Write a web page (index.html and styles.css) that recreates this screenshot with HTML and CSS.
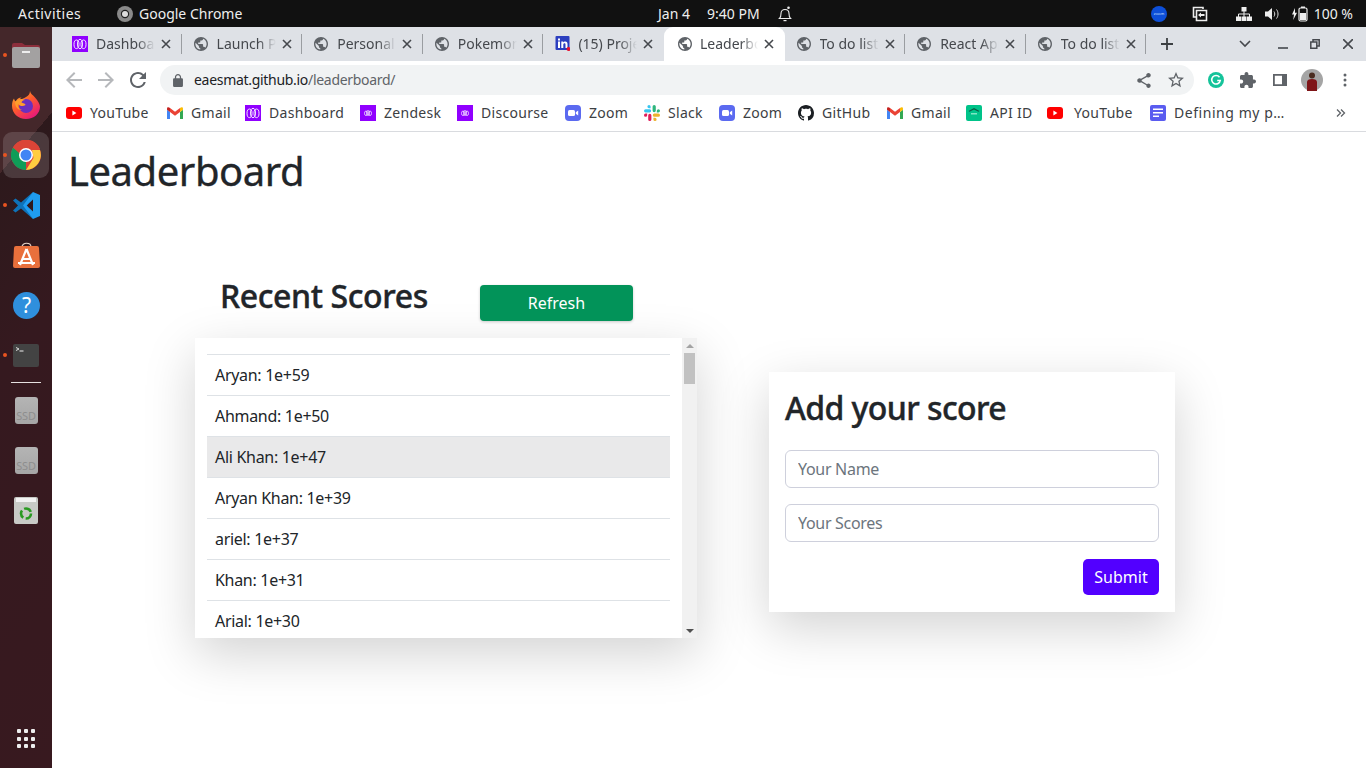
FILE: index.html
```html
<!DOCTYPE html>
<html lang="en">
<head>
<meta charset="utf-8">
<title>Leaderboard</title>
<link rel="stylesheet" href="styles.css">
</head>
<body>
<svg class="defs" width="0" height="0" aria-hidden="true">
  <symbol id="globe" viewBox="0.57 0.57 22.86 22.86"><path fill="#5f6368" d="M12 2C6.48 2 2 6.48 2 12s4.48 10 10 10 10-4.48 10-10S17.52 2 12 2zm-1 17.93c-3.95-.49-7-3.85-7-7.93 0-.62.08-1.21.21-1.79L9 15v1c0 1.1.9 2 2 2v1.93zm6.9-2.54c-.26-.81-1-1.39-1.9-1.39h-1v-3c0-.55-.45-1-1-1H8v-2h2c.55 0 1-.45 1-1V7h2c1.1 0 2-.9 2-2v-.41c2.93 1.19 5 4.06 5 7.41 0 2.08-.8 3.97-2.1 5.39z"/></symbol>
  <symbol id="meta" viewBox="0 0 16 16"><rect width="16" height="16" fill="#9000ff"/><g fill="none" stroke="#fff" stroke-width=".9"><ellipse cx="4.500" cy="8.300" rx="2.500" ry="4.300"/><ellipse cx="8" cy="8" rx="2.500" ry="4.600"/><ellipse cx="11.500" cy="8.300" rx="2.500" ry="4.300"/></g></symbol>
  <symbol id="metasmall" viewBox="0 0 16 16"><rect width="16" height="16" fill="#9000ff"/><g fill="none" stroke="#fff" stroke-width=".7"><ellipse cx="6" cy="8.300" rx="1.500" ry="2.300"/><ellipse cx="8" cy="8" rx="1.500" ry="2.500"/><ellipse cx="10" cy="8.300" rx="1.500" ry="2.300"/></g></symbol>
  <symbol id="close" viewBox="0 0 10 10"><path stroke="#45484d" stroke-width="1.600" d="M1 1l8 8M9 1l-8 8"/></symbol>
  <symbol id="yt" viewBox="0 0 16 12"><rect width="16" height="12" rx="3" fill="#f00"/><path fill="#fff" d="M6.400 3.600v4.800L10.400 6z"/></symbol>
  <symbol id="gmail" viewBox="0 0 16 12"><path fill="#4285f4" d="M0 12h3V5L0 2.700z"/><path fill="#34a853" d="M13 12h3V2.700L13 5z"/><path fill="#fbbc04" d="M13 1v4l3-2.300V1.500C16 0 14.300-.4 13 1z"/><path fill="#ea4335" d="M3 5V1l5 3.800L13 1v4L8 8.800z"/><path fill="#c5221f" d="M0 1.500v1.200L3 5V1C1.700-.4 0 0 0 1.500z"/></symbol>
  <symbol id="zoomb" viewBox="0 0 16 16"><rect width="16" height="16" rx="4" fill="#5b6af0"/><rect x="3" y="5" width="7" height="6" rx="1.500" fill="#fff"/><path fill="#fff" d="M10.800 7.300l2.400-1.700v4.800l-2.400-1.700z"/></symbol>
</svg>

<div class="desktop">
  <header class="topbar">
    <div class="top-left">
      <span class="activities">Activities</span>
      <span class="top-app">
        <svg class="top-chrome" width="16" height="16" viewBox="0 0 16 16"><circle cx="8" cy="8" r="8" fill="#8a8a8a"/><circle cx="8" cy="8" r="4.200" fill="#222"/><circle cx="8" cy="8" r="3" fill="#ddd"/></svg>
        Google Chrome
      </span>
    </div>
    <div class="top-center">
      <span class="top-date">Jan 4</span>
      <span class="top-time">9:40 PM</span>
      <svg class="top-bell" width="14" height="16" viewBox="0 0 14 16"><path fill="none" stroke="#eee" stroke-width="1.100" d="M1.500 12.500c1.200-1 1.500-2.500 1.500-5 0-2.500 1.500-4 4-4s4 1.500 4 4c0 2.500.3 4 1.500 5z"/><path fill="#eee" d="M5.500 14h3v1.200h-3z"/><circle cx="10.500" cy="1.800" r="1.300" fill="#eee"/></svg>
    </div>
    <div class="top-right">
      <svg class="tr-zoom" width="16" height="16" viewBox="0 0 16 16"><circle cx="8" cy="8" r="8" fill="#0d4fd8"/><text class="zoom-mini" x="8" y="9.200" text-anchor="middle">zoom</text></svg>
      <svg class="tr-screen" width="16" height="16" viewBox="0 0 16 16"><path fill="none" stroke="#eee" stroke-width="1.600" d="M11 3V1.500H1.500V11H4"/><path fill="none" stroke="#eee" stroke-width="1.600" d="M4.500 4.500h10v10h-10z"/><path fill="#eee" d="M6 9l3-2.500v1.500h3.500v2H9v1.500z"/></svg>
      <svg class="tr-net" width="16" height="14" viewBox="0 0 16 14"><path fill="#eee" d="M5.500 0h5v4.500h-5zM0 9.500h5V14H0zM11 9.500h5V14h-5zM5.500 9.500h5V14h-5z"/><path fill="none" stroke="#eee" d="M8 4v6M2.500 10V7h11v3"/></svg>
      <svg class="tr-vol" width="15" height="14" viewBox="0 0 15 14"><path fill="#eee" d="M0 4.500h3L7 1v12L3 9.500H0z"/><path fill="none" stroke="#ddd" d="M9 4.500c1 1.500 1 3.500 0 5M11.500 2.500c2 2.500 2 6.500 0 9"/></svg>
      <svg class="tr-batt" width="16" height="16" viewBox="0 0 16 16"><path fill="#eee" d="M3 2L0 8.500h2L1.200 14 5 6.700H3z"/><rect x="7" y="2" width="8" height="13" rx="1.500" fill="none" stroke="#eee" stroke-width="1.200"/><rect x="9" y=".5" width="4" height="1.500" fill="#eee"/><rect x="8" y="7" width="6" height="7" fill="#eee"/></svg>
      <span class="tr-pct">100 %</span>
    </div>
  </header>

  <div class="workspace">
    <nav class="dock">
      <div class="dock-item running">
        <svg width="30" height="26" viewBox="0 0 30 26"><path fill="#8d2f3c" d="M1 3a2 2 0 012-2h8l3 2h13a2 2 0 012 2v8H1z"/><rect x="1" y="5" width="28" height="21" rx="2" fill="#a3a1a1"/><rect x="11" y="9" width="8" height="2" fill="#eee"/></svg>
      </div>
      <div class="dock-item">
        <svg width="28" height="28" viewBox="0 0 28 28"><defs><linearGradient id="fx" x1="0" y1="0" x2=".7" y2="1"><stop offset="0" stop-color="#ffbd2e"/><stop offset=".5" stop-color="#ff5a2c"/><stop offset="1" stop-color="#e6177c"/></linearGradient></defs><path fill="url(#fx)" d="M18 0c.5 3 3 4 5 6.500 3 3.500 5 7 5 9 0 7-6 12.500-14 12.500S0 22.500 0 14.500C0 11 1 9 2 7.500c.3 1.500 1 2.500 2 3 .7-2.500 3-4 5.500-4-1 .8-2 1.800-2 3C11 7 18 6 18 0z"/><circle cx="14" cy="15" r="7" fill="#6a2fbf"/><path fill="#ff9d2c" d="M3 11c2-3 7-4 10-2-2 .3-3 1-3.500 2.500 1.500 1 4 1 4 2.500-2.500 2-6 1-7.500-1-.8 2 1 5 4 6-4 .3-7-3-7-8z"/></svg>
      </div>
      <div class="dock-item running active">
        <svg width="30" height="30" viewBox="0 0 30 30"><circle cx="15" cy="15" r="15" fill="#db4437"/><path fill="#0f9d58" d="M15 30A15 15 0 012 7.500L9 19.500l6 1.500z"/><path fill="#0f9d58" d="M2 7.500l6 4 2 8-3 1z"/><path fill="#ffcd40" d="M15 30l7.500-12L21 10h8a15 15 0 01-14 20z"/><path fill="#db4437" d="M2 7.500A15 15 0 0129 9H15L8 13z"/><circle cx="15" cy="15" r="7" fill="#fff"/><circle cx="15" cy="15" r="5.500" fill="#4285f4"/></svg>
      </div>
      <div class="dock-item running">
        <svg width="27" height="27" viewBox="0 0 27 27"><path fill="#0e72b8" d="M0 8.500L2.500 6.500 8 10.500 20 0l-6 13.500 6 13.500L8 16.500 2.500 20.500 0 18.500 5 13.500z"/><path fill="#1f9cf0" d="M20 0l7 3v21l-7 3-10-13.500zM20 7.500L13.500 13.500 20 19.500z"/></svg>
      </div>
      <div class="dock-item">
        <svg width="27" height="27" viewBox="0 0 27 27"><path fill="none" stroke="#e8d5c8" stroke-width="1.200" d="M9 5c0-5 9-5 9 0"/><path fill="#e9703c" d="M1 6a2 2 0 012-2h21a2 2 0 012 2l1 18a2 2 0 01-2 2H2a2 2 0 01-2-2z"/><path fill="none" stroke="#fff" stroke-width="2.200" d="M13.500 7L7 23M13.500 7L20 23M9 17h9M5 21h17"/></svg>
      </div>
      <div class="dock-item">
        <svg width="27" height="27" viewBox="0 0 27 27"><circle cx="13.500" cy="13.500" r="13.500" fill="#2f8fdd"/><text class="help-mark" x="13.500" y="21" text-anchor="middle">?</text></svg>
      </div>
      <div class="dock-item running">
        <svg width="26" height="23" viewBox="0 0 26 23"><rect width="26" height="23" rx="2" fill="#434343"/><path fill="none" stroke="#ddd" d="M3 3.500l3 1.500-3 1.500"/><path stroke="#eee" d="M6.500 7h4"/></svg>
      </div>
      <div class="dock-sep"></div>
      <div class="dock-item">
        <div class="disk"><span>SSD</span></div>
      </div>
      <div class="dock-item">
        <div class="disk"><span>SSD</span></div>
      </div>
      <div class="dock-item">
        <svg width="24" height="27" viewBox="0 0 24 27"><rect width="24" height="27" rx="2" fill="#c8cac6"/><rect x="2" y="1" width="20" height="4" fill="#f2f2f2"/><circle cx="12" cy="16.500" r="5" fill="none" stroke="#2a9a22" stroke-width="2.600" stroke-dasharray="8 2.500"/></svg>
      </div>
      <div class="dock-grid">
        <i></i><i></i><i></i><i></i><i></i><i></i><i></i><i></i><i></i>
      </div>
    </nav>

    <main class="browser">
      <div class="tabstrip">
        <div class="tab"><svg class="fav"><use href="#meta"/></svg><span class="tab-title">Dashboard</span><svg class="tab-x"><use href="#close"/></svg></div>
        <div class="tab"><svg class="fav"><use href="#globe"/></svg><span class="tab-title">Launch Pad</span><svg class="tab-x"><use href="#close"/></svg></div>
        <div class="tab"><svg class="fav"><use href="#globe"/></svg><span class="tab-title">Personal</span><svg class="tab-x"><use href="#close"/></svg></div>
        <div class="tab"><svg class="fav"><use href="#globe"/></svg><span class="tab-title">Pokemon</span><svg class="tab-x"><use href="#close"/></svg></div>
        <div class="tab nodiv"><svg class="fav" viewBox="-1.500 0 16 16"><rect width="14" height="14" rx="1" fill="#2c3fbf"/><path fill="#fff" d="M2.500 5.500h2V12h-2zM2.500 2.500h2v2h-2zM5.800 5.500h1.900v1c.5-.8 1.200-1.100 2-1.100 1.700 0 2.300 1 2.300 2.800V12h-2V8.600c0-.9-.3-1.400-1-1.400s-1.200.5-1.200 1.500V12h-2z"/><circle cx="13" cy="13" r="2" fill="#e8112d"/></svg><span class="tab-title">(15) Project</span><svg class="tab-x"><use href="#close"/></svg></div>
        <div class="tab active"><svg class="fav"><use href="#globe"/></svg><span class="tab-title">Leaderboard</span><svg class="tab-x"><use href="#close"/></svg></div>
        <div class="tab"><svg class="fav"><use href="#globe"/></svg><span class="tab-title">To do list</span><svg class="tab-x"><use href="#close"/></svg></div>
        <div class="tab"><svg class="fav"><use href="#globe"/></svg><span class="tab-title">React App</span><svg class="tab-x"><use href="#close"/></svg></div>
        <div class="tab"><svg class="fav"><use href="#globe"/></svg><span class="tab-title">To do list</span><svg class="tab-x"><use href="#close"/></svg></div>
        <svg class="tab-new" width="12" height="12" viewBox="0 0 12 12"><path stroke="#3c4043" stroke-width="1.800" d="M6 0v12M0 6h12"/></svg>
        <svg class="tab-chev" width="12" height="8" viewBox="0 0 12 8"><path fill="none" stroke="#45484d" stroke-width="1.600" d="M1 1l5 5 5-5"/></svg>
        <svg class="win-min" width="10" height="10" viewBox="0 0 10 10"><path stroke="#45484d" stroke-width="1.600" d="M0 9h10"/></svg>
        <svg class="win-max" width="10" height="10" viewBox="0 0 10 10"><path fill="none" stroke="#45484d" stroke-width="1.500" d="M3 3V.8h6.200V7H7M.8 3h6v6.200H.8z"/></svg>
        <svg class="win-close" width="10" height="10" viewBox="0 0 10 10"><path stroke="#45484d" stroke-width="1.600" d="M0 0l10 10M10 0L0 10"/></svg>
      </div>

      <div class="toolbar">
        <svg class="tb-back" width="16" height="16" viewBox="4 4 16 16"><path fill="#b6b8bb" d="M20 11H7.830l5.590-5.590L12 4l-8 8 8 8 1.410-1.410L7.830 13H20v-2z"/></svg>
        <svg class="tb-fwd" width="16" height="16" viewBox="4 4 16 16"><path fill="#b6b8bb" d="M4 11h12.170l-5.590-5.590L12 4l8 8-8 8-1.410-1.410L16.170 13H4v-2z"/></svg>
        <svg class="tb-reload" width="16" height="16" viewBox="4 4 16 16"><path fill="#5f6368" d="M17.650 6.350A7.958 7.958 0 0012 4c-4.420 0-7.990 3.580-7.990 8s3.570 8 7.990 8c3.730 0 6.840-2.550 7.730-6h-2.080A5.990 5.990 0 0112 18c-3.310 0-6-2.690-6-6s2.690-6 6-6c1.660 0 3.140.690 4.220 1.780L13 11h7V4l-2.350 2.350z"/></svg>
        <div class="omnibox">
          <svg class="lock" width="10" height="13" viewBox="4 1 16 21"><path fill="#5f6368" d="M18 8h-1V6c0-2.760-2.240-5-5-5S7 3.240 7 6v2H6c-1.100 0-2 .9-2 2v10c0 1.100.9 2 2 2h12c1.100 0 2-.9 2-2V10c0-1.100-.9-2-2-2zM9 6c0-1.660 1.340-3 3-3s3 1.340 3 3v2H9V6z"/></svg>
          <span class="url"><b>eaesmat.github.io</b>/leaderboard/</span>
          <svg class="omni-share" width="14" height="15" viewBox="3 2 18 20"><path fill="#5f6368" d="M18 16.080c-.76 0-1.440.3-1.960.77L8.910 12.700c.05-.23.09-.46.09-.7s-.04-.47-.09-.7l7.050-4.110c.54.5 1.250.81 2.040.81 1.660 0 3-1.340 3-3s-1.340-3-3-3-3 1.340-3 3c0 .24.04.47.09.7L8.040 9.810C7.500 9.310 6.790 9 6 9c-1.660 0-3 1.340-3 3s1.340 3 3 3c.79 0 1.500-.31 2.040-.81l7.120 4.160c-.05.21-.08.43-.08.65 0 1.610 1.310 2.920 2.920 2.920s2.920-1.310 2.920-2.920-1.310-2.920-2.920-2.920z"/></svg>
          <svg class="omni-star" width="16" height="16" viewBox="2 2 20 20"><path fill="#5f6368" d="M22 9.240l-7.190-.62L12 2 9.190 8.630 2 9.240l5.460 4.730L5.820 21 12 17.270 18.180 21l-1.630-7.030L22 9.240zM12 15.400l-3.760 2.270 1-4.280-3.320-2.880 4.380-.38L12 6.100l1.710 4.040 4.380.38-3.320 2.880 1 4.280L12 15.400z"/></svg>
        </div>
        <svg class="tb-gram" width="16" height="16" viewBox="0 0 16 16"><circle cx="8" cy="8" r="8" fill="#15c39a"/><path fill="none" stroke="#fff" stroke-width="1.500" d="M11.500 5.200A4.300 4.300 0 1012.300 8.400H9.200"/></svg>
        <svg class="tb-ext" width="16" height="16" viewBox="2 1 21 21"><path fill="#5f6368" d="M20.500 11H19V7c0-1.100-.9-2-2-2h-4V3.500C13 2.120 11.880 1 10.500 1S8 2.120 8 3.500V5H4c-1.100 0-1.990.9-1.990 2v3.800H3.500c1.490 0 2.700 1.210 2.700 2.700s-1.210 2.700-2.700 2.700H2V20c0 1.100.9 2 2 2h3.800v-1.500c0-1.490 1.210-2.700 2.700-2.700 1.490 0 2.700 1.210 2.700 2.700V22H17c1.100 0 2-.9 2-2v-4h1.500c1.380 0 2.500-1.120 2.500-2.500S21.880 11 20.500 11z"/></svg>
        <svg class="tb-side" width="14" height="12" viewBox="0 0 14 12"><path fill="#5f6368" d="M0 0h14v12H0zM1.800 1.800v8.400H9V1.800z"/></svg>
        <svg class="tb-avatar" width="22" height="22" viewBox="0 0 22 22"><circle cx="11" cy="11" r="11" fill="#a5a5a5"/><circle cx="11" cy="6.500" r="3" fill="#4a2c20"/><path fill="#7f1518" d="M6 22V13c0-2 2-3 5-3s5 1 5 3v9z"/></svg>
        <svg class="tb-menu" width="4" height="14" viewBox="0 0 4 14"><circle cx="2" cy="2" r="1.500" fill="#5f6368"/><circle cx="2" cy="7" r="1.500" fill="#5f6368"/><circle cx="2" cy="12" r="1.500" fill="#5f6368"/></svg>
      </div>

      <div class="bookmarks">
        <a class="bm bm1"><svg class="bm-ic"><use href="#yt"/></svg>YouTube</a>
        <a class="bm bm2"><svg class="bm-ic"><use href="#gmail"/></svg>Gmail</a>
        <a class="bm bm3"><svg class="bm-ic"><use href="#meta"/></svg>Dashboard</a>
        <a class="bm bm4"><svg class="bm-ic"><use href="#metasmall"/></svg>Zendesk</a>
        <a class="bm bm5"><svg class="bm-ic"><use href="#metasmall"/></svg>Discourse</a>
        <a class="bm bm6"><svg class="bm-ic"><use href="#zoomb"/></svg>Zoom</a>
        <a class="bm bm7"><svg class="bm-ic" viewBox="0 0 16 16"><path fill="#36c5f0" d="M5 0a1.600 1.600 0 000 3.200h1.600V1.600A1.600 1.600 0 005 0zM1.600 4.200a1.600 1.600 0 000 3.200h4a1.600 1.600 0 000-3.200z"/><path fill="#2eb67d" d="M16 5.800a1.600 1.600 0 00-3.200 0v1.600h1.600A1.600 1.600 0 0016 5.800zM11.800 1.600a1.600 1.600 0 00-3.200 0v4a1.600 1.600 0 003.200 0z"/><path fill="#ecb22e" d="M11 16a1.600 1.600 0 000-3.200H9.400v1.600A1.600 1.600 0 0011 16zM14.400 11.800a1.600 1.600 0 000-3.200h-4a1.600 1.600 0 000 3.200z"/><path fill="#e01e5a" d="M0 10.200a1.600 1.600 0 003.200 0V8.600H1.600A1.600 1.600 0 000 10.200zM4.200 14.400a1.600 1.600 0 003.200 0v-4a1.600 1.600 0 00-3.200 0z"/></svg>Slack</a>
        <a class="bm bm8"><svg class="bm-ic"><use href="#zoomb"/></svg>Zoom</a>
        <a class="bm bm9"><svg class="bm-ic" viewBox="0 0 16 16"><path fill="#1b1f23" d="M8 0C3.580 0 0 3.580 0 8c0 3.540 2.290 6.530 5.470 7.590.4.070.55-.17.55-.38 0-.19-.01-.82-.01-1.490-2.010.37-2.530-.49-2.690-.94-.09-.23-.48-.94-.82-1.130-.28-.15-.68-.52-.01-.53.63-.01 1.080.58 1.230.82.72 1.210 1.870.87 2.330.66.07-.52.28-.87.51-1.070-1.780-.2-3.640-.89-3.640-3.950 0-.87.31-1.590.82-2.150-.08-.2-.36-1.020.08-2.120 0 0 .67-.21 2.200.82.64-.18 1.320-.27 2-.27.68 0 1.360.09 2 .27 1.530-1.040 2.200-.82 2.200-.82.44 1.100.16 1.920.08 2.120.51.56.82 1.270.82 2.150 0 3.070-1.870 3.750-3.650 3.950.29.25.54.73.54 1.480 0 1.070-.01 1.930-.01 2.200 0 .21.15.46.55.38A8.013 8.013 0 0016 8c0-4.420-3.580-8-8-8z"/></svg>GitHub</a>
        <a class="bm bm10"><svg class="bm-ic"><use href="#gmail"/></svg>Gmail</a>
        <a class="bm bm11"><svg class="bm-ic" viewBox="0 0 16 16"><rect width="16" height="16" rx="2" fill="#00c389"/><path fill="#0b5c46" d="M2.500 6L8 3l5.500 3-1 .8L8 4.500 3.500 6.800z"/><path fill="#7fe6c4" d="M5 8h6v1.500H5z"/></svg>API ID</a>
        <a class="bm bm12"><svg class="bm-ic"><use href="#yt"/></svg>YouTube</a>
        <a class="bm bm13"><svg class="bm-ic" viewBox="0 0 16 16"><rect width="16" height="16" rx="2" fill="#5a5cf0"/><path fill="#fff" d="M3 3.500h10V5H3zM3 7h10v1.500H3zM3 10.500h6V12H3z"/></svg><span class="bm-long">Defining my p…</span></a>
        <svg class="bm-more" width="10" height="8" viewBox="0 0 10 8"><path fill="none" stroke="#5f6368" stroke-width="1.300" d="M1 .5L4.500 4 1 7.500M5 .5L8.500 4 5 7.500"/></svg>
      </div>

      <section class="page">
        <h1 class="page-title">Leaderboard</h1>
        <div class="columns">
          <div class="scores">
            <div class="scores-head">
              <h2 class="heading">Recent Scores</h2>
              <button class="btn-refresh" type="button">Refresh</button>
            </div>
            <div class="score-box">
              <ul class="score-list">
                <li>Aryan: 1e+59</li>
                <li>Ahmand: 1e+50</li>
                <li class="hl">Ali Khan: 1e+47</li>
                <li>Aryan Khan: 1e+39</li>
                <li>ariel: 1e+37</li>
                <li>Khan: 1e+31</li>
                <li>Arial: 1e+30</li>
                <li>Aryan: 1e+29</li>
              </ul>
              <div class="scrollbar" aria-hidden="true">
                <span class="sb-btn"><i class="sb-up"></i></span>
                <span class="sb-thumb"></span>
                <span class="sb-btn sb-end"><i class="sb-down"></i></span>
              </div>
            </div>
          </div>
          <form class="add-card">
            <h2 class="heading">Add your score</h2>
            <input class="field" type="text" placeholder="Your Name">
            <input class="field" type="text" placeholder="Your Scores">
            <div class="actions"><button class="btn-submit" type="button">Submit</button></div>
          </form>
        </div>
      </section>
    </main>
  </div>
</div>
</body>
</html>
```

FILE: styles.css
```css
* { box-sizing: border-box; }
html, body { margin: 0; padding: 0; height: 100%; overflow: hidden; background: #fff; }
body { font-family: "Noto Sans", "Open Sans", sans-serif; }
.defs { display: block; height: 0; width: 0; overflow: hidden; }
.desktop { width: 1366px; height: 768px; display: flex; flex-direction: column; }

/* top bar */
.topbar { height: 27px; flex: none; background: #111; color: #eee; display: flex; align-items: center; font-size: 14px; }
.top-left { width: 658px; padding-left: 18px; display: flex; align-items: center; flex: none; }
.activities { width: 99px; letter-spacing: .5px; }
.top-app { display: flex; align-items: center; gap: 6px; }
.top-center { display: flex; align-items: center; flex: none; }
.top-date { width: 49px; }
.top-time { width: 71px; }
.top-right { margin-left: auto; padding-right: 13px; display: flex; align-items: center; }
.zoom-mini { font-family: "Noto Sans", sans-serif; font-size: 4px; fill: #cfe0ff; }
.tr-zoom { margin-right: 25px; }
.tr-screen { margin-right: 28px; }
.tr-net { margin-right: 13px; }
.tr-vol { margin-right: 12px; }
.tr-batt { margin-right: 6px; }

/* dock */
.workspace { flex: 1; display: flex; min-height: 0; }
.dock { width: 52px; flex: none; display: flex; flex-direction: column; align-items: center; padding-top: 3px; background: linear-gradient(130.5deg, #44272a 0, #44272a 95px, #2d191c 95px, #35191f 220px, #38191f 100%); }
.dock-item { width: 46px; height: 50px; flex: none; display: flex; align-items: center; justify-content: center; position: relative; }
.dock-item.active { background: rgba(255,255,255,.14); border-radius: 9px; height: 46px; margin: 2px 0; }
.dock-item.running::before { content: ""; position: absolute; left: 0; top: 50%; width: 4px; height: 4px; margin-top: -2px; border-radius: 50%; background: #e95420; }
.dock-sep { width: 30px; height: 1px; background: #e6e0e0; margin: 2px 0; flex: none; }
.disk { width: 23px; height: 27px; border-radius: 3px; background: linear-gradient(#b4b4b4, #a6a6a6); display: flex; align-items: flex-end; justify-content: center; overflow: hidden; }
.disk span { font-size: 11px; line-height: 16px; color: #8e8e8e; font-family: "Noto Sans", sans-serif; letter-spacing: -.2px; white-space: nowrap; }
.help-mark { font-family: "Noto Sans", sans-serif; font-size: 21px; fill: #fff; }
.dock-grid { margin-top: auto; margin-bottom: 20px; display: grid; grid-template-columns: repeat(3, 4px); gap: 3.500px 3px; }
.dock-grid i { width: 4px; height: 4px; background: #eee; border-radius: 1px; }

/* browser */
.browser { flex: 1; min-width: 0; display: flex; flex-direction: column; background: #fff; }
.tabstrip { height: 34px; flex: none; background: #dee1e6; display: flex; align-items: center; padding-left: 9px; }
.tab { width: 120.6px; height: 34px; flex: none; display: flex; align-items: center; padding: 0 11px; font-size: 14px; line-height: 18px; color: #45484d; position: relative; }
.tab::after { content: ""; position: absolute; right: 0; top: 7px; width: 1px; height: 20px; background: #9a9da1; }
.tab.nodiv::after, .tab.active::after { display: none; }
.tab.active { background: #fff; border-radius: 9px 9px 0 0; padding-left: 13px; }
.fav { width: 16px; height: 16px; flex: none; }
.tab-title { margin: 0 0 1px 8px; width: 59px; overflow: hidden; white-space: nowrap; flex: none; -webkit-mask-image: linear-gradient(90deg, #000 70%, transparent 100%); mask-image: linear-gradient(90deg, #000 70%, transparent 100%); }
.tab.active .tab-title { margin-left: 7px; width: 58px; }
.tab-x { width: 10px; height: 10px; margin-left: 6px; flex: none; }
.tab-new { margin-left: 15px; flex: none; }
.tab-chev { margin-left: 66px; flex: none; }
.win-min { margin-left: 27px; flex: none; }
.win-max { margin-left: 22px; flex: none; }
.win-close { margin-left: 23px; flex: none; }

.toolbar { height: 34px; flex: none; display: flex; align-items: center; padding: 4px 0 0 14px; background: #fff; }
.tb-back { flex: none; }
.tb-fwd { margin-left: 16px; flex: none; }
.tb-reload { margin-left: 16px; flex: none; }
.omnibox { width: 1034px; height: 30px; margin-left: 14px; flex: none; border-radius: 15px; background: #f1f3f4; display: flex; align-items: center; padding-left: 13px; font-size: 14px; color: #5f6368; }
.url { margin: 0 0 2px 11px; letter-spacing: -.3px; }
.url b { font-weight: 400; color: #202124; }
.omni-share { margin-left: auto; flex: none; }
.omni-star { margin-left: 17px; margin-right: 10px; flex: none; }
.tb-gram { margin-left: 14px; flex: none; }
.tb-ext { margin-left: 16px; flex: none; }
.tb-side { margin-left: 17px; flex: none; }
.tb-avatar { margin-left: 14px; flex: none; }
.tb-menu { margin-left: 20px; flex: none; }

.bookmarks { height: 37px; flex: none; display: flex; align-items: center; padding-left: 14px; border-bottom: 1px solid #d9dbdf; font-size: 14px; line-height: 18px; color: #3c4043; letter-spacing: .3px; }
.bm { display: flex; align-items: center; gap: 8px; flex: none; white-space: nowrap; padding-bottom: 1px; }
.bm-ic { width: 16px; height: 16px; flex: none; margin-top: 1px; }
.bm1 { width: 101px; } .bm2 { width: 78px; } .bm3 { width: 115px; } .bm4 { width: 97px; }
.bm5 { width: 108px; } .bm6 { width: 79px; } .bm7 { width: 75px; } .bm8 { width: 79px; }
.bm9 { width: 89px; } .bm10 { width: 79px; } .bm11 { width: 81px; } .bm12 { width: 103px; }
.bm12 svg { margin-right: 3px; }
.bm-long { letter-spacing: .55px; }
.bm13 { width: 190px; }
.bm-more { flex: none; margin-left: -4px; }

/* page */
.page { flex: 1; min-height: 0; padding: 15px 0 0 16px; color: #212529; }
.page-title { margin: 0; font-size: 40px; line-height: 48px; font-weight: 400; letter-spacing: -.45px; -webkit-text-stroke: .35px #212529; }
.columns { display: flex; align-items: flex-start; margin: 0 0 0 127px; }
.scores { width: 502px; flex: none; margin-top: 76px; }
.scores-head { height: 71px; display: flex; align-items: flex-start; }
.heading { margin: 0; font-size: 32px; line-height: 38px; font-weight: 500; -webkit-text-stroke: .4px #212529; }
.scores-head .heading { margin-left: 25px; width: 260px; margin-top: 6px; letter-spacing: -.4px; }
.btn-refresh { width: 153px; height: 36px; margin-top: 14px; border: 0; border-radius: 4px; background: #029359; color: #fff; font: inherit; font-size: 16px; box-shadow: 0 1px 3px rgba(0,0,0,.2); }
.score-box { height: 300px; margin-top: -4px; display: flex; background: #fff; box-shadow: 0 16px 48px rgba(0,0,0,.175); }
.score-list { flex: 1; min-width: 0; margin: 0; padding: 16px 12px; list-style: none; overflow: hidden; }
.score-list li { height: 41px; padding: 8px; font-size: 16px; line-height: 24px; border-top: 1px solid #dee2e6; letter-spacing: -.3px; }
.score-list li.hl { background: #e9e9ea; }
.scrollbar { width: 15px; flex: none; background: #f1f1f1; display: flex; flex-direction: column; }
.sb-btn { height: 15px; flex: none; display: flex; align-items: center; justify-content: center; }
.sb-end { margin-top: auto; }
.sb-up { width: 0; height: 0; border: solid transparent; border-width: 0 4px 4px; border-bottom-color: #a3a3a3; }
.sb-down { width: 0; height: 0; border: solid transparent; border-width: 4px 4px 0; border-top-color: #505050; }
.sb-thumb { height: 31px; margin: 0 2px; background: #c1c1c1; flex: none; }
.add-card { width: 406px; flex: none; margin: 177px 0 0 72px; padding: 16px 16px 17px; background: #fff; box-shadow: 0 16px 48px rgba(0,0,0,.175); display: flex; flex-direction: column; }
.add-card .heading { margin: 1px 0 23px; letter-spacing: -.6px; }
.field { height: 38px; margin-bottom: 16px; padding: 6px 12px; border: 1px solid #ced0dc; border-radius: 6px; font: inherit; font-size: 16px; letter-spacing: -.3px; color: #212529; background: #fff; }
.field::placeholder { color: #6c757d; opacity: 1; }
.actions { display: flex; justify-content: flex-end; margin-top: 1px; }
.btn-submit { width: 76px; height: 36px; border: 0; border-radius: 5px; background: #5200ff; color: #fff; font: inherit; font-size: 16px; }
```
